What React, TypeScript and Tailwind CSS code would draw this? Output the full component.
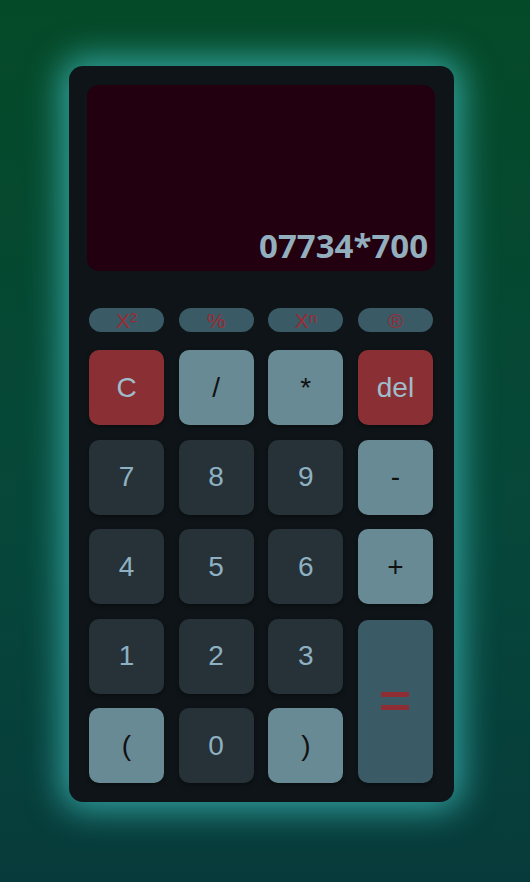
import React from "react";

const pill = "h-[24px] w-[75px] rounded-full bg-[#3a5a66] text-[#9b2c35] flex items-center justify-center text-[21px] leading-none";
const base = "w-[75px] h-[75px] rounded-[10px] flex items-center justify-center text-[28px] shadow-[0_2px_4px_rgba(0,0,0,0.35)]";
const dark = base + " bg-[#263237] text-[#8fb0c2]";
const light = base + " bg-[#678a94] text-[#111111]";
const red = base + " bg-[#8a3035] text-[#9fbccb]";

export default function App() {
  return (
    <div className="min-h-[882px] w-full bg-[linear-gradient(to_bottom,#054a28,#06473a_60%,#073b3b)] pt-[66px]" style={{ fontFamily: '"Liberation Sans", Arial, sans-serif' }}>
      <div className="ml-[69px] w-[385px] h-[736px] rounded-[14px] bg-[#0e1417] shadow-[0_0_34px_8px_rgba(60,185,185,0.8)] pt-[19px] pl-[18px] pr-[19px]">
        <div className="h-[186px] rounded-[12px] bg-[#22000f] flex items-end justify-end pr-[7px] pb-[9px]">
          <span className="text-[33px] font-bold text-[#93afbe] leading-none" style={{ fontFamily: '"Open Sans", sans-serif' }}>07734*700</span>
        </div>
        <div className="pl-[2px] pr-[2px] mt-[37px]">
          <div className="flex justify-between">
            <div className={pill}>X²</div>
            <div className={pill}>%</div>
            <div className={pill}>X<sup className="text-[15px] relative top-[-2px]">n</sup></div>
            <div className={pill}>®</div>
          </div>
          <div className="mt-[18px] grid grid-cols-[75px_75px_75px_75px] justify-between grid-rows-[75px_75px_75px_75px_75px] gap-y-[14.5px]">
            <button className={red}>C</button>
            <button className={light}>/</button>
            <button className={light}>*</button>
            <button className={red}>del</button>
            <button className={dark}>7</button>
            <button className={dark}>8</button>
            <button className={dark}>9</button>
            <button className={light}>-</button>
            <button className={dark}>4</button>
            <button className={dark}>5</button>
            <button className={dark}>6</button>
            <button className={light}>+</button>
            <button className={dark}>1</button>
            <button className={dark}>2</button>
            <button className={dark}>3</button>
            <button className="row-span-2 w-[75px] h-[163px] mt-[1px] rounded-[10px] bg-[#3a5a66] flex items-center justify-center shadow-[0_2px_4px_rgba(0,0,0,0.35)]">
              <span className="flex flex-col gap-[8px]">
                <span className="block w-[28px] h-[5px] bg-[#8e2d33]"></span>
                <span className="block w-[28px] h-[5px] bg-[#8e2d33]"></span>
              </span>
            </button>
            <button className={light}>(</button>
            <button className={dark}>0</button>
            <button className={light}>)</button>
          </div>
        </div>
      </div>
    </div>
  );
}
